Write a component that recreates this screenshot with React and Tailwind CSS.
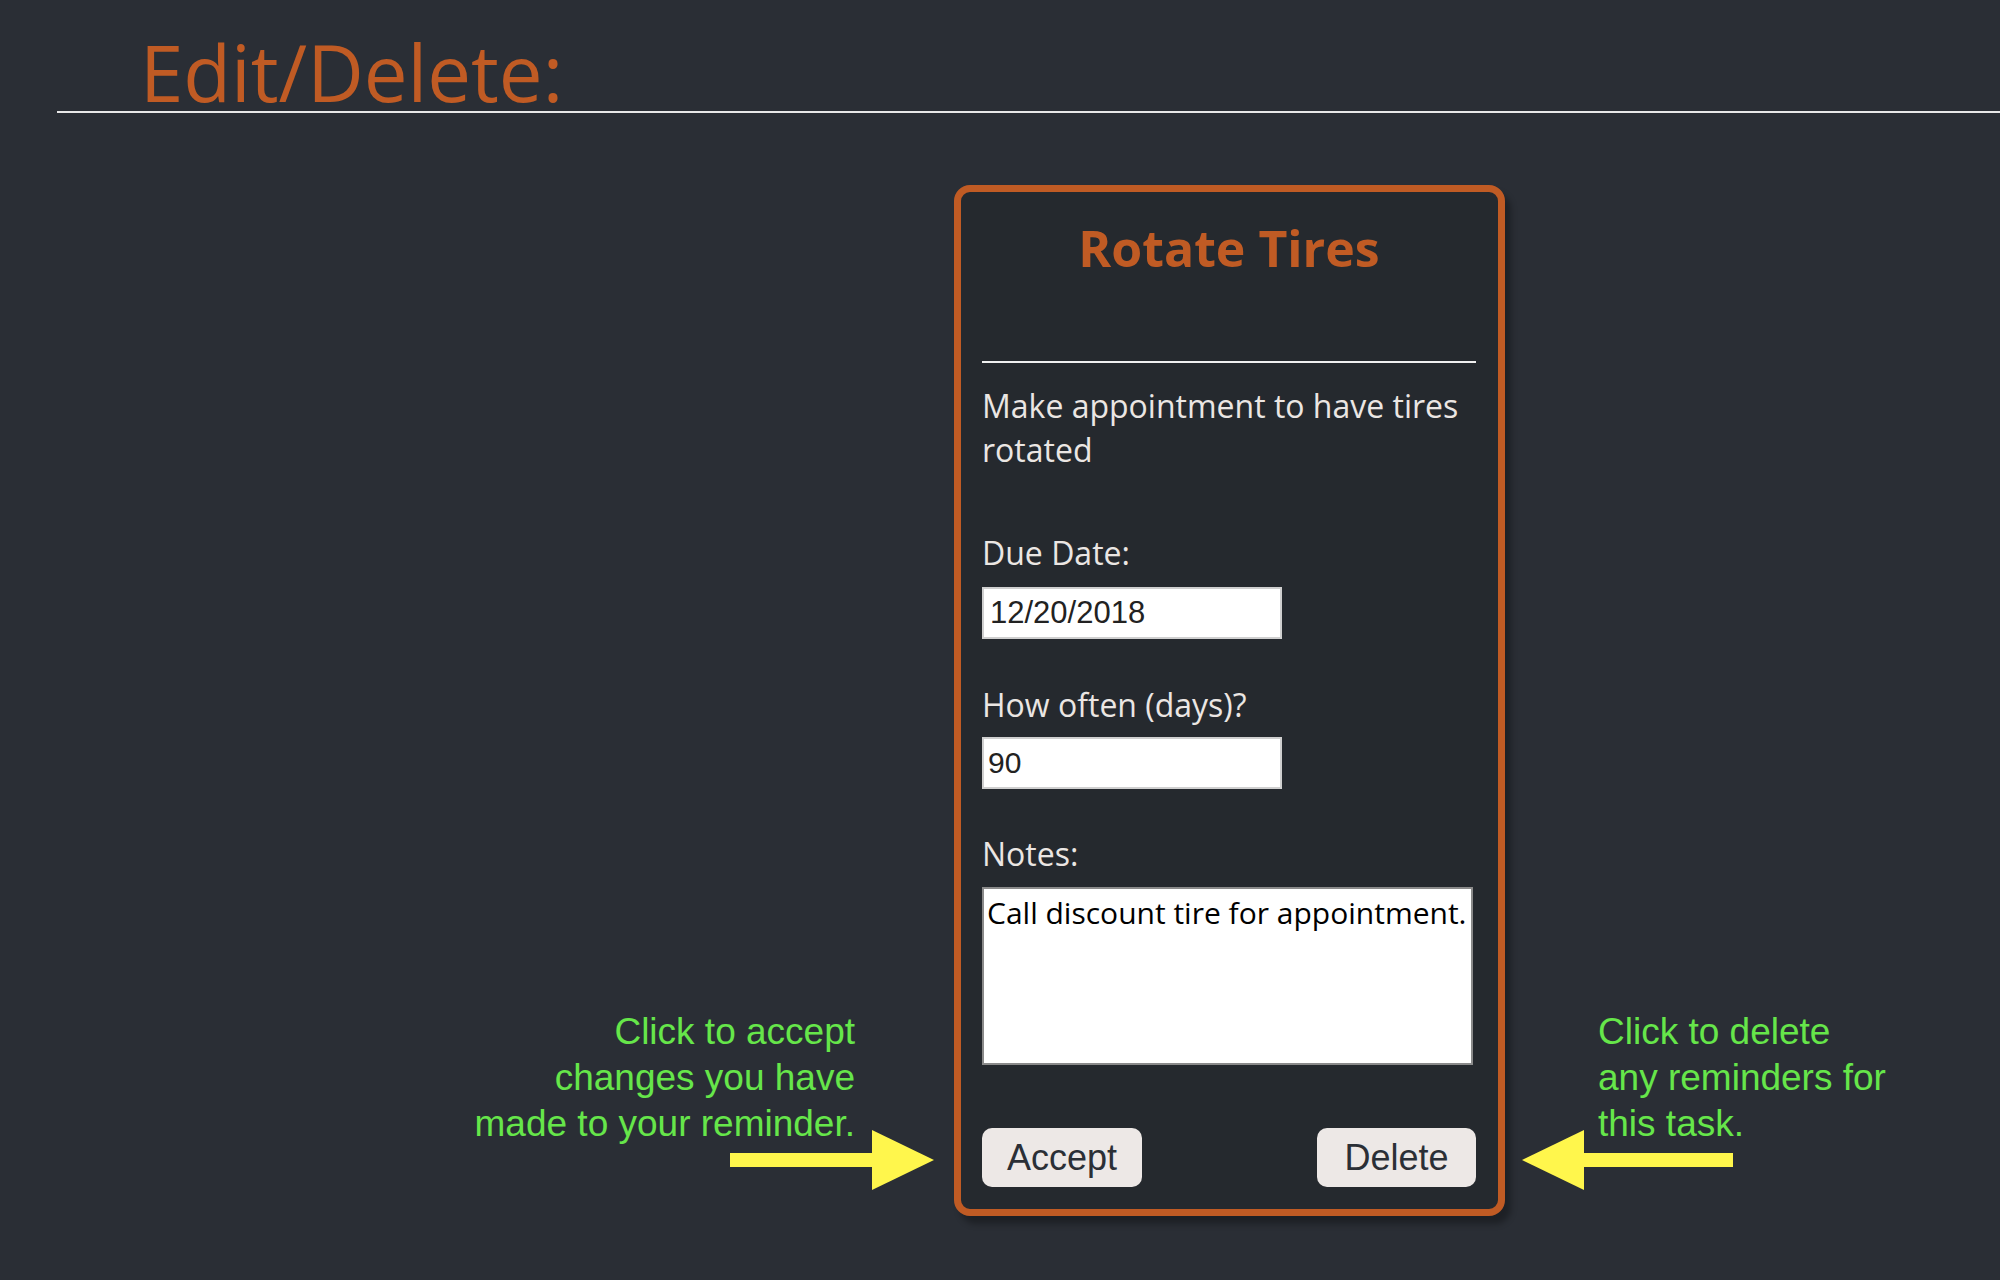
import React from 'react';

const RightArrow = () => (
    <svg width="204" height="60" viewBox="0 0 204 60" className="-mt-[17px] block">
        <rect x="0" y="23" width="143" height="14" fill="#fff64c" />
        <polygon points="142,0 204,30 142,60" fill="#fff64c" />
    </svg>
);

const LeftArrow = () => (
    <svg width="211" height="60" viewBox="0 0 211 60" className="-mt-[17px] block">
        <polygon points="0,30 62,0 62,60" fill="#fff64c" />
        <rect x="61" y="23" width="150" height="14" fill="#fff64c" />
    </svg>
);

const App = () => {
    return (
        <div className="min-h-screen bg-[#2a2e35] font-['Open_Sans',sans-serif]">

            <div className="pl-[57px] pt-[33px]">
                <h1 className="pl-[83px] border-b-2 border-[#e8e8e8] text-[78px] leading-none font-normal text-[#c05b24]">
                    Edit/Delete:
                </h1>
            </div>

            <div className="flex items-start mt-[72px]">

                {/* accept hint */}
                <div className="w-[934px] mr-[20px] mt-[824px] flex flex-col items-end">
                    <p className="pr-[79px] text-right font-['Liberation_Sans',Arial,sans-serif] text-[37px] leading-[46px] text-[#66e64a]">
                        Click to accept<br />changes you have<br />made to your reminder.
                    </p>
                    <RightArrow />
                </div>

                {/* card */}
                <div className="w-[551px] border-[7px] border-[#c05b24] rounded-[16px] bg-[#25292e] shadow-[6px_8px_6px_rgba(0,0,0,0.3)] pt-[31px] pb-[22px] pl-[21px] pr-[22px] flex flex-col">
                    <h2 className="text-center text-[50px] leading-none font-bold text-[#c05b24]">Rotate Tires</h2>
                    <div className="mt-[88px] h-[2px] bg-[#f0f0f0]" />

                    <p className="mt-[21px] text-[32px] leading-[44px] text-[#ebe6e3]">
                        Make appointment to have tires rotated
                    </p>

                    <label className="mt-[59px] text-[32px] leading-[44px] text-[#ebe6e3]">Due Date:</label>
                    <input
                        defaultValue="12/20/2018"
                        className="mt-[12px] w-[300px] h-[52px] border-2 border-[#cfcfcf] bg-white px-[6px] font-['Liberation_Sans',Arial,sans-serif] text-[31px] text-[#222] outline-none"
                    />

                    <label className="mt-[44px] text-[32px] leading-[44px] text-[#ebe6e3]">How often (days)?</label>
                    <input
                        defaultValue="90"
                        className="mt-[10px] w-[300px] h-[52px] border-2 border-[#cfcfcf] bg-white px-[4px] font-['Liberation_Sans',Arial,sans-serif] text-[30px] text-[#222] outline-none"
                    />

                    <label className="mt-[43px] text-[32px] leading-[44px] text-[#ebe6e3]">Notes:</label>
                    <textarea
                        wrap="off"
                        defaultValue="Call discount tire for appointment."
                        className="mt-[11px] w-[491px] h-[178px] border-2 border-[#8a8a8a] bg-white px-[3px] pt-[3px] font-['Open_Sans',sans-serif] text-[30px] leading-[41px] text-black resize-none overflow-hidden whitespace-pre outline-none"
                    />

                    <div className="mt-[63px] flex justify-between">
                        <button className="w-[160px] h-[59px] rounded-[10px] bg-[#ede8e6] font-['Liberation_Sans',Arial,sans-serif] text-[36px] text-[#2b2f36]">
                            Accept
                        </button>
                        <button className="w-[159px] h-[59px] rounded-[10px] bg-[#ede8e6] font-['Liberation_Sans',Arial,sans-serif] text-[36px] text-[#2b2f36]">
                            Delete
                        </button>
                    </div>
                </div>

                {/* delete hint */}
                <div className="ml-[17px] mt-[824px] flex flex-col items-start">
                    <p className="pl-[76px] font-['Liberation_Sans',Arial,sans-serif] text-[37px] leading-[46px] text-[#66e64a]">
                        Click to delete<br />any reminders for<br />this task.
                    </p>
                    <LeftArrow />
                </div>

            </div>
        </div>
    );
};

export default App;
